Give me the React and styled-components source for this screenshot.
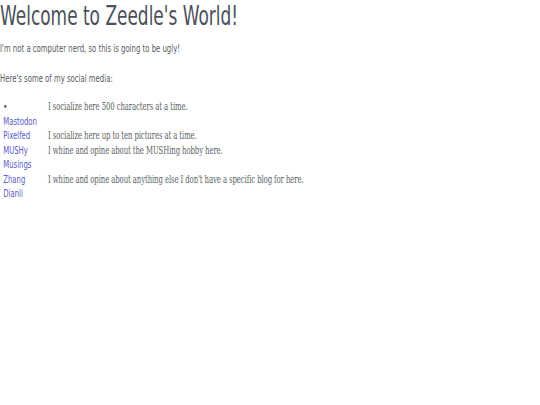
import React from "react";
import styled, { createGlobalStyle } from "styled-components";

const squeeze = 0.64;

const GlobalStyle = createGlobalStyle`
    html, body {
        margin: 0;
        padding: 0;
        background: #ffffff;
    }
`;

const Page = styled.div`
    width: ${540 / squeeze}px;
    transform: scaleX(${squeeze});
    transform-origin: 0 0;
    font-family: "DejaVu Sans", Verdana, sans-serif;
    color: #555a63;
`;

const Title = styled.h1`
    margin: 0;
    padding-top: 1px;
    font-size: 26.5px;
    line-height: 30px;
    font-weight: normal;
    color: #4a4f59;
`;

const Para = styled.p`
    margin: ${({ top }) => top}px 0 0;
    font-size: 10.8px;
    line-height: 14px;
`;

const Links = styled.div`
    display: grid;
    grid-template-columns: 70px 1fr;
    margin-top: 14px;
    padding-left: 5px;
    font-size: 10.8px;
    line-height: 14.5px;
`;

const Name = styled.div`
    display: flex;
    flex-direction: column;
`;

const Bullet = styled.span`
    color: #444;
`;

const Link = styled.a`
    color: #5a5acb;
    text-decoration: none;
`;

const Blurb = styled.div`
    font-family: "DejaVu Serif", "Liberation Serif", serif;
    letter-spacing: -0.15px;
    color: #5b5f66;
`;

const media = [
    { name: "Mastodon", text: "I socialize here 500 characters at a time.", bullet: true },
    { name: "Pixelfed", text: "I socialize here up to ten pictures at a time." },
    { name: "MUSHy Musings", text: "I whine and opine about the MUSHing hobby here." },
    { name: "Zhang Dianli", text: "I whine and opine about anything else I don't have a specific blog for here." },
];

export default function App() {
    return (
        <Page>
            <GlobalStyle />
            <Title>Welcome to Zeedle's World!</Title>
            <Para top={11}>I'm not a computer nerd, so this is going to be ugly!</Para>
            <Para top={16}>Here's some of my social media:</Para>
            <Links>
                {media.map((m) => (
                    <React.Fragment key={m.name}>
                        <Name>
                            {m.bullet && <Bullet>•</Bullet>}
                            {m.name.split(" ").map((w) => (
                                <Link key={w} href="#">
                                    {w}
                                </Link>
                            ))}
                        </Name>
                        <Blurb>{m.text}</Blurb>
                    </React.Fragment>
                ))}
            </Links>
        </Page>
    );
}
